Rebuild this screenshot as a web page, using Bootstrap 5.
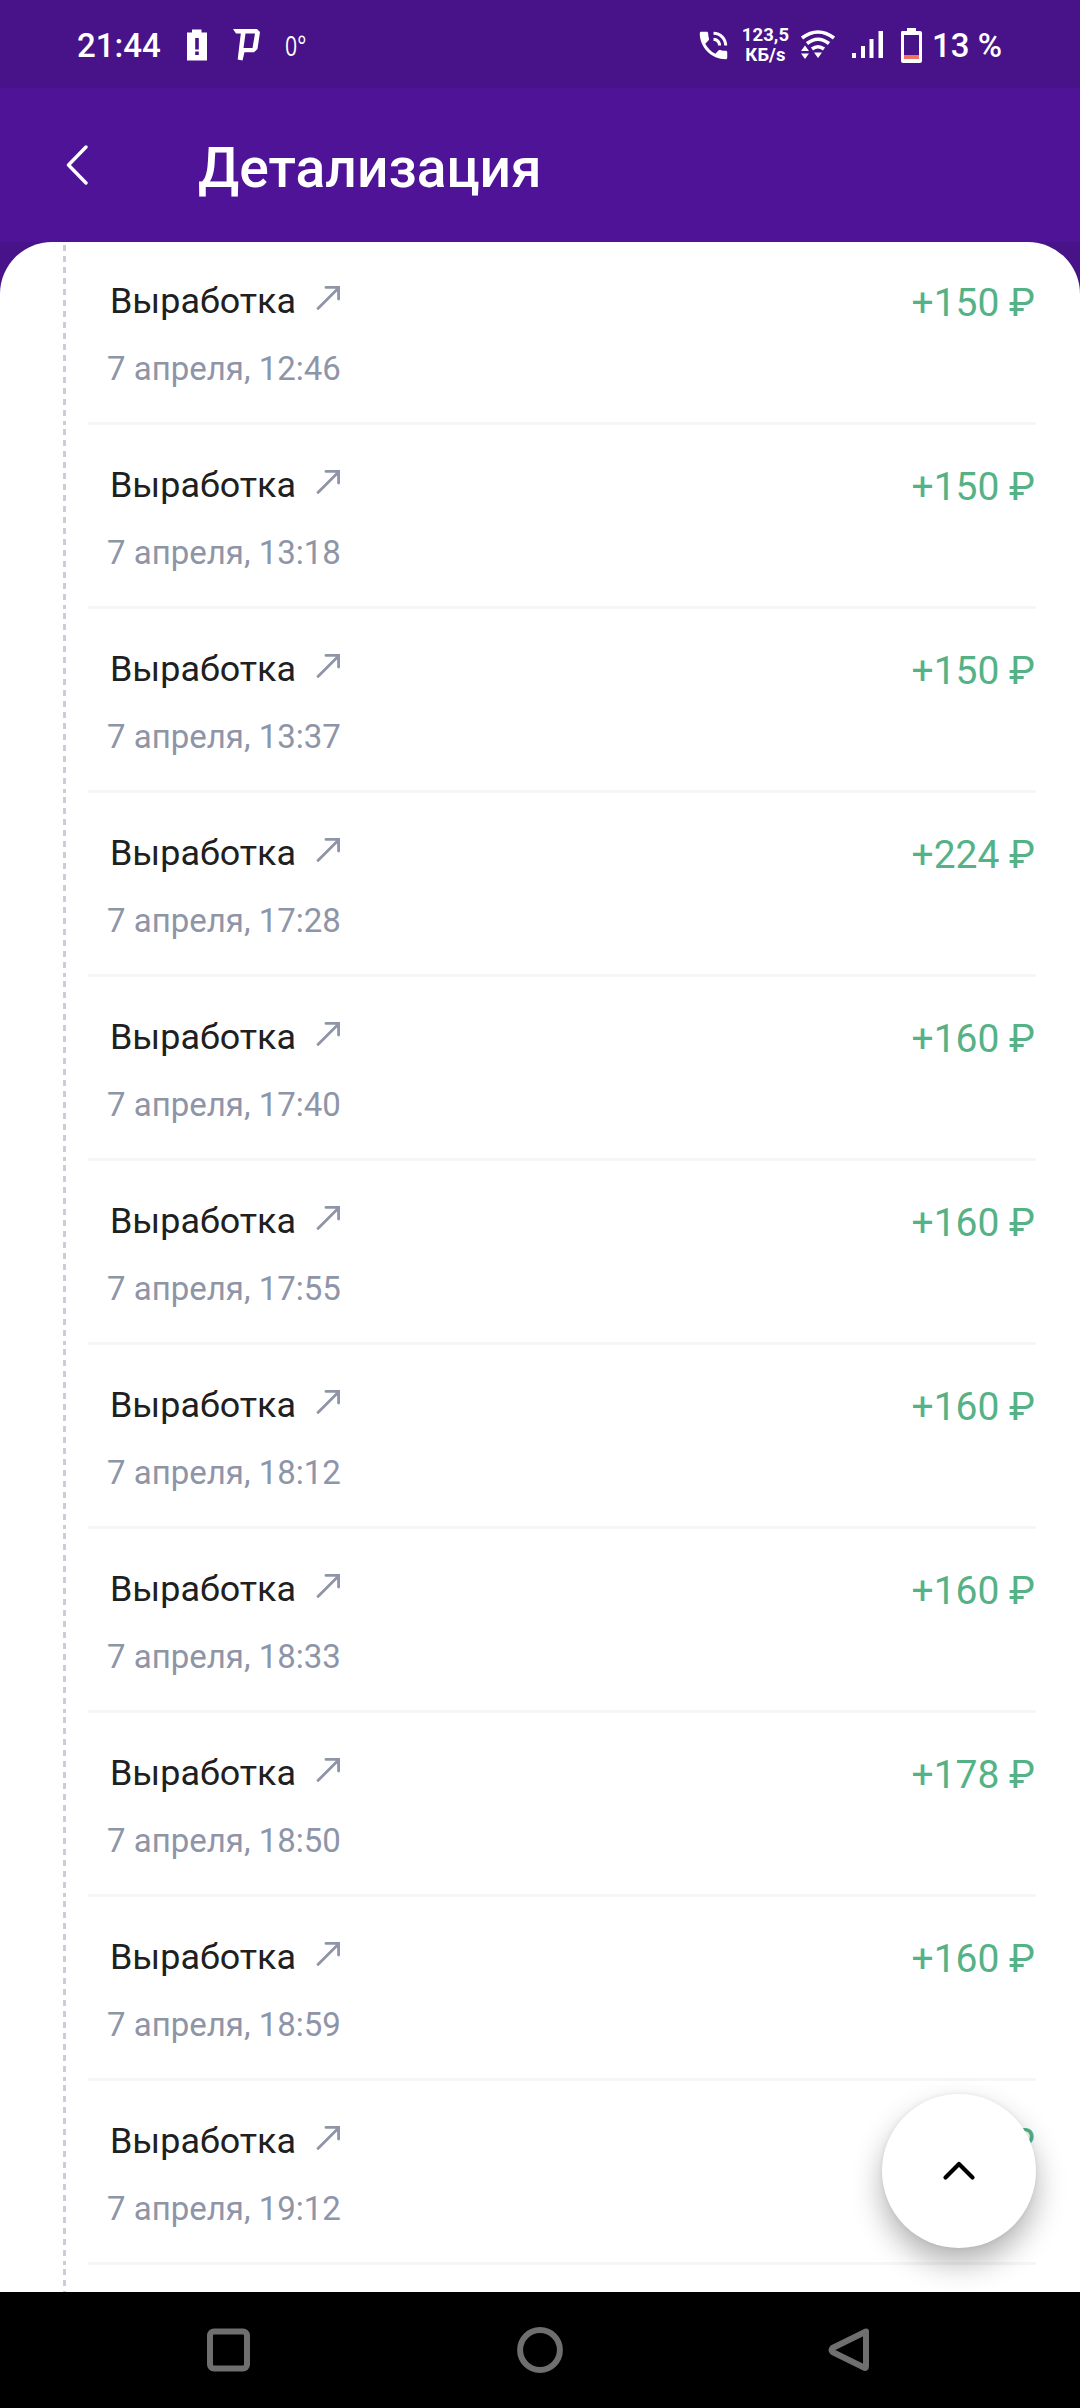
<!DOCTYPE html>
<html lang="ru">
<head>
<meta charset="utf-8">
<meta name="viewport" content="width=device-width, initial-scale=1">
<title>Детализация</title>
<link href="https://cdn.jsdelivr.net/npm/bootstrap@5.3.0/dist/css/bootstrap.min.css" rel="stylesheet">
<style>
body{font-family:Roboto,"Noto Sans",sans-serif;background:#481389;line-height:1;letter-spacing:0}
.screen{width:1080px;height:2408px}
svg{display:block;flex:none}
.statusbar{height:88px;background:#481389;font-size:33px;font-weight:500;padding:2px 78px 0 77px}
.temp{font-family:"Open Sans",sans-serif;font-weight:400;font-size:28px;transform:scaleX(.76);transform-origin:left}
.speed{font-size:18.5px;line-height:20px;font-weight:700;width:49px;letter-spacing:.1px;margin:0 10px 0 13px}
.topbar{height:154px;background:#4e1396;padding-left:66px}
.topbar h1{font-size:55.2px;font-weight:500;line-height:64px;margin-left:109px;padding-top:6px}
.sheet{height:2050px;background:#fff;border-radius:52px 52px 0 0}
.timeline{margin-top:-1px}
.entry{height:184px}
.dashes{width:3px;margin:4px 22px 0 63px;background:repeating-linear-gradient(#cbced8 0 6px,transparent 6px 11px)}
.entry-body{border-bottom:3px solid #f4f6f8;margin-right:44px;padding:39px 1px 0 19px}
.kind{font-size:35.9px;line-height:42px;color:#202020;padding-left:3px}
.kind svg{margin:5px 0 0 20px}
.when{font-size:33px;line-height:40px;color:#8e95a7;margin-top:27px}
.sum{font-size:39px;line-height:46px;color:#54b286}
.up{position:absolute;left:882px;top:2094px;width:154px;height:154px;background:#fff;box-shadow:0 15px 30px rgba(0,0,0,.3),0 0 5px rgba(0,0,0,.07)}
.navkeys{height:116px;padding:0 206px 0 206px}
.signal{margin:0 14px}
</style>
</head>
<body>
<svg width="0" height="0" class="position-absolute"><symbol id="go" viewBox="0 0 26 26"><path d="M2 23.5 22.5 3M10 2.4H22.6V14" fill="none" stroke="#8e95a7" stroke-width="2.8" stroke-linecap="round"/></symbol></svg>
<div class="screen position-relative overflow-hidden d-flex flex-column">
<header class="statusbar d-flex align-items-center justify-content-between text-white">
<div class="d-flex align-items-center">
<span class="clock">21:44</span>
<svg class="ms-4" width="24" height="34" viewBox="0 0 24 34"><path fill="#fff" fill-rule="evenodd" d="M2 4.500h5V1.500h9.500v3H22v28H2zM10.200 10v11.500h3.600V10zM10.200 23.500v3.500h3.600v-3.500z"/></svg>
<svg class="ms-4" width="28" height="34" viewBox="0 0 28 34"><path fill="#fff" fill-rule="evenodd" d="M0 1H24L27 4 24.500 21 21 24.200H11.500L9.500 32.500 4.700 31.500 7.800 5.500H3zM12.500 5.500 10.500 20H19.500L22 5.500z"/></svg>
<span class="temp ms-4">0°</span>
</div>
<div class="d-flex align-items-center">
<svg width="29" height="29" viewBox="2.5 2.5 19 19"><path fill="#fff" d="M20 15.500c-1.250 0-2.450-.2-3.570-.57-.35-.11-.74-.03-1.020.24l-2.200 2.200c-2.830-1.440-5.150-3.750-6.590-6.590l2.200-2.210c.28-.26.36-.65.25-1C8.700 6.450 8.500 5.250 8.500 4c0-.55-.45-1-1-1H4c-.55 0-1 .45-1 1 0 9.390 7.610 17 17 17 .55 0 1-.45 1-1v-3.500c0-.55-.45-1-1-1zM19 12h2c0-4.970-4.030-9-9-9v2c3.870 0 7 3.130 7 7zm-4 0h2c0-2.760-2.240-5-5-5v2c1.660 0 3 1.340 3 3z"/></svg>
<div class="speed text-center">123,5<br>КБ/s</div>
<svg width="36" height="32" viewBox="0 0 36 32"><path fill="none" stroke="#fff" stroke-width="3.600" d="M2 9Q18-3 34 9M7 14.500Q18 6 29 14.500M12 20Q18 15.500 24 20"/><path fill="#fff" d="M14 23.500H22L18 29zM1 22 5 16.500 9 22zM1 24.500H9L5 30z"/></svg>
<svg class="signal" width="36" height="32" viewBox="0 0 36 32"><path fill="#fff" d="M2 24h4v5H2zM11 17h4v12h-4zM19.500 10h4v19h-4zM28.500 2h4.500v27h-4.500z"/></svg>
<svg width="24" height="38" viewBox="0 0 24 38"><path fill="#fff" fill-rule="evenodd" d="M2 5h5V2h9v3h4Q22 5 22 7V35Q22 37 20 37H3Q1 37 1 35V7Q1 5 2 5zM4 9V33H19V9z"/><path fill="#ef735f" d="M4 29h15v4H4z"/></svg>
<span class="ms-2">13 %</span>
</div>
</header>
<div class="topbar d-flex align-items-center text-white">
<svg width="23" height="40" viewBox="0 0 23 40"><path fill="none" stroke="#fff" stroke-width="3.400" stroke-linecap="round" stroke-linejoin="round" d="M20 2 2.500 20 20 38"/></svg>
<h1 class="mb-0">Детализация</h1>
</div>
<main class="sheet overflow-hidden">
<div class="timeline">
<div class="entry d-flex"><i class="dashes"></i><div class="entry-body flex-grow-1 d-flex justify-content-between"><div><div class="kind d-flex">Выработка<svg width="26" height="26"><use href="#go"/></svg></div><div class="when">7 апреля, 12:46</div></div><div class="sum">+150 ₽</div></div></div>
<div class="entry d-flex"><i class="dashes"></i><div class="entry-body flex-grow-1 d-flex justify-content-between"><div><div class="kind d-flex">Выработка<svg width="26" height="26"><use href="#go"/></svg></div><div class="when">7 апреля, 13:18</div></div><div class="sum">+150 ₽</div></div></div>
<div class="entry d-flex"><i class="dashes"></i><div class="entry-body flex-grow-1 d-flex justify-content-between"><div><div class="kind d-flex">Выработка<svg width="26" height="26"><use href="#go"/></svg></div><div class="when">7 апреля, 13:37</div></div><div class="sum">+150 ₽</div></div></div>
<div class="entry d-flex"><i class="dashes"></i><div class="entry-body flex-grow-1 d-flex justify-content-between"><div><div class="kind d-flex">Выработка<svg width="26" height="26"><use href="#go"/></svg></div><div class="when">7 апреля, 17:28</div></div><div class="sum">+224 ₽</div></div></div>
<div class="entry d-flex"><i class="dashes"></i><div class="entry-body flex-grow-1 d-flex justify-content-between"><div><div class="kind d-flex">Выработка<svg width="26" height="26"><use href="#go"/></svg></div><div class="when">7 апреля, 17:40</div></div><div class="sum">+160 ₽</div></div></div>
<div class="entry d-flex"><i class="dashes"></i><div class="entry-body flex-grow-1 d-flex justify-content-between"><div><div class="kind d-flex">Выработка<svg width="26" height="26"><use href="#go"/></svg></div><div class="when">7 апреля, 17:55</div></div><div class="sum">+160 ₽</div></div></div>
<div class="entry d-flex"><i class="dashes"></i><div class="entry-body flex-grow-1 d-flex justify-content-between"><div><div class="kind d-flex">Выработка<svg width="26" height="26"><use href="#go"/></svg></div><div class="when">7 апреля, 18:12</div></div><div class="sum">+160 ₽</div></div></div>
<div class="entry d-flex"><i class="dashes"></i><div class="entry-body flex-grow-1 d-flex justify-content-between"><div><div class="kind d-flex">Выработка<svg width="26" height="26"><use href="#go"/></svg></div><div class="when">7 апреля, 18:33</div></div><div class="sum">+160 ₽</div></div></div>
<div class="entry d-flex"><i class="dashes"></i><div class="entry-body flex-grow-1 d-flex justify-content-between"><div><div class="kind d-flex">Выработка<svg width="26" height="26"><use href="#go"/></svg></div><div class="when">7 апреля, 18:50</div></div><div class="sum">+178 ₽</div></div></div>
<div class="entry d-flex"><i class="dashes"></i><div class="entry-body flex-grow-1 d-flex justify-content-between"><div><div class="kind d-flex">Выработка<svg width="26" height="26"><use href="#go"/></svg></div><div class="when">7 апреля, 18:59</div></div><div class="sum">+160 ₽</div></div></div>
<div class="entry d-flex"><i class="dashes"></i><div class="entry-body flex-grow-1 d-flex justify-content-between"><div><div class="kind d-flex">Выработка<svg width="26" height="26"><use href="#go"/></svg></div><div class="when">7 апреля, 19:12</div></div><div class="sum">+160 ₽</div></div></div>
<div class="entry d-flex"><i class="dashes"></i></div>
</div>
</main>
<button class="up btn border-0 rounded-circle p-0 d-flex align-items-center justify-content-center" aria-label="Наверх"><svg width="34" height="22" viewBox="0 0 34 22"><path fill="none" stroke="#000" stroke-width="4.200" stroke-linecap="round" stroke-linejoin="round" d="M3.500 17.500 17 4 30.500 17.500"/></svg></button>
<nav class="navkeys position-relative bg-black d-flex align-items-center justify-content-between">
<svg width="46" height="46" viewBox="0 0 46 46"><rect x="4" y="4.500" width="37" height="37" rx="4" fill="none" stroke="#6f6f6f" stroke-width="6"/></svg>
<svg width="50" height="50" viewBox="0 0 50 50"><circle cx="25" cy="25" r="19.900" fill="none" stroke="#6f6f6f" stroke-width="6"/></svg>
<svg width="46" height="46" viewBox="0 0 46 46"><path d="M38 4.500Q37 4.500 36 5.500L4.500 21Q2.500 23 4.500 25L36 40.500Q38 42 38 39V6z" fill="none" stroke="#6f6f6f" stroke-width="6" stroke-linejoin="round"/></svg>
</nav>
</div>
<script src="https://cdn.jsdelivr.net/npm/bootstrap@5.3.0/dist/js/bootstrap.bundle.min.js"></script>
</body>
</html>
